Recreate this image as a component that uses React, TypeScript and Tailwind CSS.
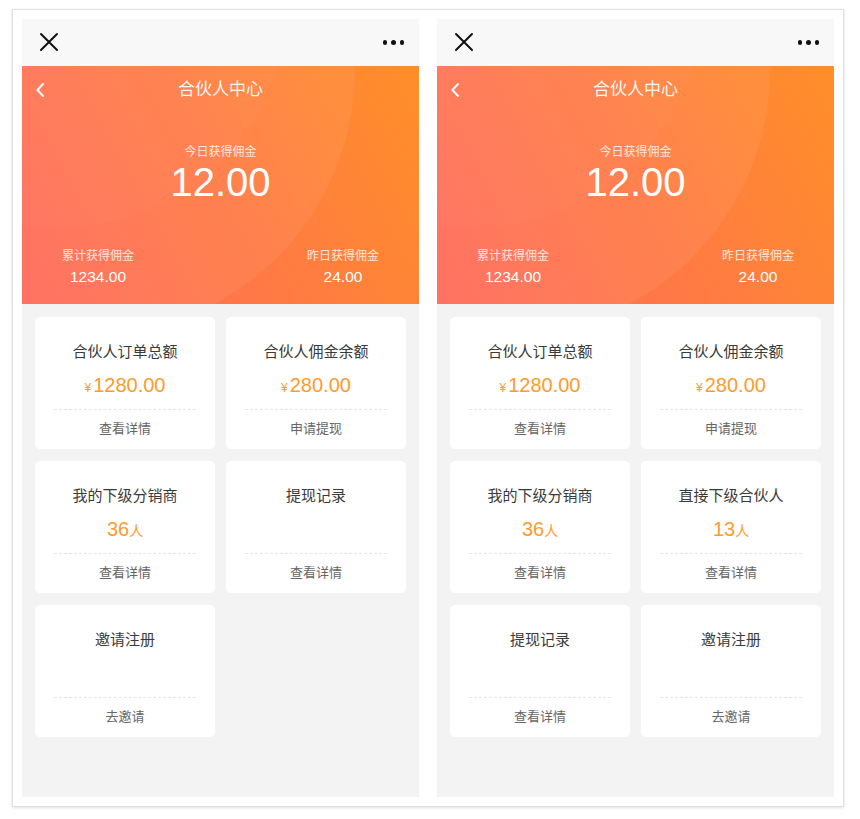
import React from 'react';

type Card = {
  title: string;
  amount?: string;
  prefix?: string;
  suffix?: string;
  action: string;
};

const leftCards: Card[] = [
  { title: '合伙人订单总额', prefix: '¥', amount: '1280.00', action: '查看详情' },
  { title: '合伙人佣金余额', prefix: '¥', amount: '280.00', action: '申请提现' },
  { title: '我的下级分销商', amount: '36', suffix: '人', action: '查看详情' },
  { title: '提现记录', action: '查看详情' },
  { title: '邀请注册', action: '去邀请' },
];

const rightCards: Card[] = [
  { title: '合伙人订单总额', prefix: '¥', amount: '1280.00', action: '查看详情' },
  { title: '合伙人佣金余额', prefix: '¥', amount: '280.00', action: '申请提现' },
  { title: '我的下级分销商', amount: '36', suffix: '人', action: '查看详情' },
  { title: '直接下级合伙人', amount: '13', suffix: '人', action: '查看详情' },
  { title: '提现记录', action: '查看详情' },
  { title: '邀请注册', action: '去邀请' },
];

const font = 'font-["Liberation_Sans","Noto_Sans_CJK_SC",sans-serif]';

function StatCard({ card }: { card: Card }) {
  return (
    <div className="h-[132px] rounded-[5px] bg-white pt-[25px] text-center">
      <div className="h-[20px] text-[15px] leading-[20px] text-[#3a3a3a]">{card.title}</div>
      <div className="mt-[10px] h-[26px] leading-[26px] text-[#ff9b2b]">
        {card.amount && (
          <>
            {card.prefix && <span className="mr-[2px] text-[12px]">{card.prefix}</span>}
            <span className="text-[20px]">{card.amount}</span>
            {card.suffix && <span className="text-[14px]">{card.suffix}</span>}
          </>
        )}
      </div>
      <div className="mx-[19px] mt-[11px] border-t border-dashed border-[#e4e4e4]" />
      <div className="mt-[9px] h-[20px] text-[13px] leading-[20px] text-[#666]">{card.action}</div>
    </div>
  );
}

function Phone({ cards }: { cards: Card[] }) {
  return (
    <div className="flex h-[778px] w-[397px] flex-col bg-[#f3f3f3]">
      {/* WeChat style top bar */}
      <div className="flex h-[47px] items-center justify-between bg-[#f8f8f8] pl-[16px] pr-[15px]">
        <svg width="20" height="20" viewBox="0 0 20 20" className="ml-[1px] mt-[-2px]">
          <path d="M2 2L18 18M18 2L2 18" stroke="#111" strokeWidth="2" strokeLinecap="round" />
        </svg>
        <div className="flex gap-[4px]">
          <span className="h-[4.5px] w-[4.5px] rounded-full bg-[#111]" />
          <span className="h-[4.5px] w-[4.5px] rounded-full bg-[#111]" />
          <span className="h-[4.5px] w-[4.5px] rounded-full bg-[#111]" />
        </div>
      </div>

      {/* Orange summary header */}
      <div className="relative h-[238px] overflow-hidden bg-linear-[62deg] from-[#ff6a5a] via-[#ff7a44] to-[#ff8f28] text-white">
        <div className="absolute left-[-197px] top-[-261px] h-[530px] w-[530px] rounded-full bg-white/[0.06]" />
        <div className="absolute left-[-190px] top-[-294px] h-[456px] w-[456px] rounded-full bg-white/[0.02]" />

        <div className="relative">
          <div className="relative flex h-[48px] items-center justify-center">
            <svg width="10" height="16" viewBox="0 0 10 16" className="absolute left-[13px]">
              <path d="M8 2L2.5 8L8 14" stroke="white" strokeWidth="2" fill="none" strokeLinecap="round" strokeLinejoin="round" />
            </svg>
            <span className="text-[17px] text-white/95">合伙人中心</span>
          </div>

          <div className="mt-[30px] text-center text-[12px] leading-[16px] text-white/80">今日获得佣金</div>
          <div className="text-center text-[40px] leading-[44px]">12.00</div>

          <div className="mt-[44px] flex justify-between px-[40px]">
            <div className="text-center">
              <div className="text-[12px] leading-[16px] text-white/80">累计获得佣金</div>
              <div className="mt-[3px] text-[15.5px] leading-[20px]">1234.00</div>
            </div>
            <div className="text-center">
              <div className="text-[12px] leading-[16px] text-white/80">昨日获得佣金</div>
              <div className="mt-[3px] text-[15.5px] leading-[20px]">24.00</div>
            </div>
          </div>
        </div>
      </div>

      {/* Entry cards */}
      <div className="grid grid-cols-2 gap-x-[11px] gap-y-[12px] px-[13px] pt-[13px]">
        {cards.map((card) => (
          <StatCard key={card.title} card={card} />
        ))}
      </div>
    </div>
  );
}

export default function App() {
  return (
    <div className={`h-[819px] w-[860px] bg-white pl-[12px] pt-[9px] ${font}`}>
      <div className="flex w-[832px] gap-[18px] border border-[#e0e0e0] bg-white p-[9px] shadow-[0_1px_3px_rgba(0,0,0,0.12)]">
        <Phone cards={leftCards} />
        <Phone cards={rightCards} />
      </div>
    </div>
  );
}
